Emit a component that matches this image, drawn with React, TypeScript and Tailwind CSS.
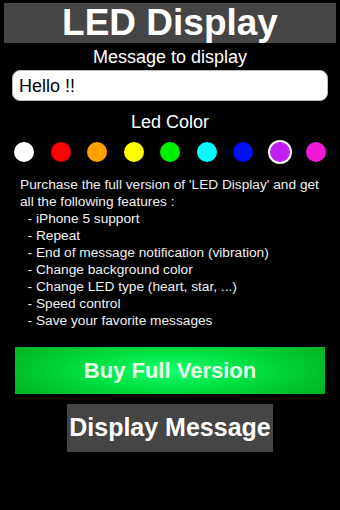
import React from 'react';

const COLORS: { hex: string; selected?: boolean }[] = [
  { hex: '#ffffff' },
  { hex: '#ff0000' },
  { hex: '#ffa200' },
  { hex: '#ffff00' },
  { hex: '#00f000' },
  { hex: '#00ffff' },
  { hex: '#0010f0' },
  { hex: '#c41cf4', selected: true },
  { hex: '#f21ad8' },
];

const LINES = [
  "Purchase the full version of 'LED Display' and get",
  'all the following features :',
  '  - iPhone 5 support',
  '  - Repeat',
  '  - End of message notification (vibration)',
  '  - Change background color',
  '  - Change LED type (heart, star, ...)',
  '  - Speed control',
  '  - Save your favorite messages',
];

export default function App() {
  return (
    <div
      className="w-[340px] h-[510px] bg-black text-white overflow-hidden"
      style={{ fontFamily: '"Liberation Sans", Arial, sans-serif' }}
    >
      {/* title bar */}
      <div className="mx-[4px] mt-[3px] h-[40px] bg-[#454545] flex items-center justify-center">
        <span className="text-[37px] font-bold leading-[40px]">LED Display</span>
      </div>

      <div className="mt-[3px] text-center text-[18px] leading-[22px]">Message to display</div>

      <div className="mx-[12px] mt-[2px] h-[31px] bg-white rounded-[8px] flex items-center px-[6px] border border-[#bbbbbb]">
        <span className="text-black text-[18px] leading-none">Hello !!</span>
      </div>

      <div className="mt-[10px] text-center text-[18px] leading-[22px]">Led Color</div>

      {/* colour picker */}
      <div className="mt-[7px] h-[24px] px-[12px] flex items-center justify-between">
        {COLORS.map((c, i) => (
          <div key={i} className="w-[24px] h-[24px] flex items-center justify-center">
            {c.selected ? (
              <div
                className="w-[24px] h-[24px] rounded-full border-[2px] border-white"
                style={{ backgroundColor: c.hex }}
              />
            ) : (
              <div className="w-[20px] h-[20px] rounded-full" style={{ backgroundColor: c.hex }} />
            )}
          </div>
        ))}
      </div>

      {/* features */}
      <div className="mt-[12px] pl-[20px] text-[13.7px] leading-[17px] text-[#f0f0f0]">
        {LINES.map((l, i) => (
          <div key={i} className="whitespace-pre">{l}</div>
        ))}
      </div>

      <div
        className="mx-[15px] mt-[18px] h-[47px] flex items-center justify-center"
        style={{ background: 'radial-gradient(ellipse 60% 90% at 50% 50%, #14ff70 0%, #00e040 45%, #00b220 100%)' }}
      >
        <span className="text-[22px] font-bold text-[#e6ffe8]">Buy Full Version</span>
      </div>

      <div className="mx-auto mt-[10px] w-[206px] h-[48px] bg-[#454545] flex items-center justify-center">
        <span className="text-[25px] font-bold whitespace-nowrap">Display Message</span>
      </div>
    </div>
  );
}
